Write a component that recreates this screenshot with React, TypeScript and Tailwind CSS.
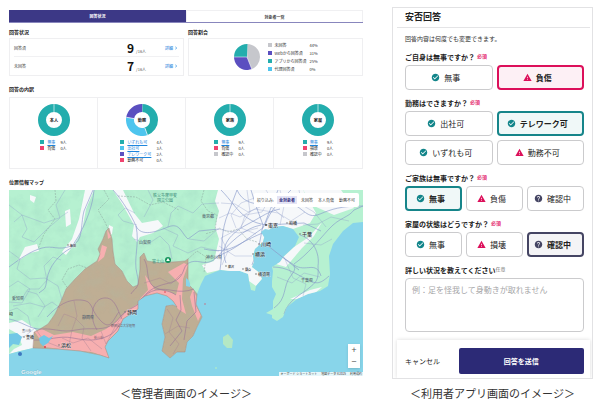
import { useState } from 'react'
import { MdCheckCircle, MdWarning, MdHelp, MdChevronRight } from 'react-icons/md'

const TEAL = '#23adad'
const PURPLE = '#5b4fc0'
const SKY = '#4ec5ee'
const PINK = '#f0436f'
const GRAY = '#c6c7cc'

const summary = [
  { label: '回答済', count: 9 },
  { label: '未回答', count: 7 },
]

const ratios = [
  { label: '未回答', value: 44, color: GRAY },
  { label: 'Webから回答済', value: 31, color: PURPLE },
  { label: 'アプリから回答済', value: 25, color: TEAL },
  { label: '代理回答済', value: 0, color: SKY },
]

const breakdown = [
  {
    title: '本人',
    items: [
      { label: '無事', value: 9, color: TEAL },
      { label: '負傷', value: 0, color: PINK },
    ],
  },
  {
    title: '勤務',
    items: [
      { label: 'いずれも可', value: 4, color: TEAL },
      { label: '出社可', value: 3, color: SKY },
      { label: 'テレワーク可', value: 2, color: PURPLE },
      { label: '勤務不可', value: 0, color: PINK },
    ],
  },
  {
    title: '家族',
    items: [
      { label: '無事', value: 9, color: TEAL },
      { label: '負傷', value: 0, color: PINK },
      { label: '確認中', value: 0, color: GRAY },
    ],
  },
  {
    title: '家屋',
    items: [
      { label: '無事', value: 9, color: TEAL },
      { label: '損壊', value: 0, color: PINK },
      { label: '確認中', value: 0, color: GRAY },
    ],
  },
]

const filters = ['全対象者', '未回答', '本人負傷', '勤務不可']

type Tone = 'ok' | 'bad' | 'unknown'

const questions: { id: string; label: string; initial: string; cols: string; options: { label: string; tone: Tone }[] }[] = [
  {
    id: 'self',
    label: 'ご自身は無事ですか？',
    initial: '負傷',
    cols: 'grid-cols-2',
    options: [
      { label: '無事', tone: 'ok' },
      { label: '負傷', tone: 'bad' },
    ],
  },
  {
    id: 'work',
    label: '勤務はできますか？',
    initial: 'テレワーク可',
    cols: 'grid-cols-2',
    options: [
      { label: '出社可', tone: 'ok' },
      { label: 'テレワーク可', tone: 'ok' },
      { label: 'いずれも可', tone: 'ok' },
      { label: '勤務不可', tone: 'bad' },
    ],
  },
  {
    id: 'family',
    label: 'ご家族は無事ですか？',
    initial: '無事',
    cols: 'grid-cols-3',
    options: [
      { label: '無事', tone: 'ok' },
      { label: '負傷', tone: 'bad' },
      { label: '確認中', tone: 'unknown' },
    ],
  },
  {
    id: 'house',
    label: '家屋の状態はどうですか？',
    initial: '確認中',
    cols: 'grid-cols-3',
    options: [
      { label: '無事', tone: 'ok' },
      { label: '損壊', tone: 'bad' },
      { label: '確認中', tone: 'unknown' },
    ],
  },
]

const selectedTone = {
  ok: 'border-2 border-[#16858a] bg-[#f0f8f8] font-bold',
  bad: 'border-2 border-[#dc0f5a] bg-[#fdf0f5] font-bold',
  unknown: 'border-2 border-[#454563] bg-[#f4f4f6] font-bold',
}

const toneIcon = {
  ok: <MdCheckCircle className="size-[9px] text-[#12858a]" />,
  bad: <MdWarning className="size-[9px] text-[#dc0f5a]" />,
  unknown: <MdHelp className="size-[9px] text-[#454563]" />,
}

function Slices({ items, hole }: { items: { label: string; value: number; color: string }[]; hole: number }) {
  const total = items.reduce((sum, i) => sum + i.value, 0)
  const width = 50 - hole
  const r = hole + width / 2
  const length = 2 * Math.PI * r
  let start = 0
  return (
    <>
      {items.filter((i) => i.value > 0).map((i) => {
        const angle = (start / total) * 360 - 90
        start += i.value
        return (
          <g key={i.label} transform={`rotate(${angle} 50 50)`}>
            <circle cx="50" cy="50" r={r} fill="none" stroke={i.color} strokeWidth={width} strokeDasharray={`${(i.value / total) * length} ${length}`} />
            <line x1={50 + hole} y1="50" x2="100" y2="50" stroke="#fff" strokeWidth="2" />
          </g>
        )
      })}
    </>
  )
}

function Heading({ children }: { children: string }) {
  return <h2 className="text-[5px] leading-[10px] font-bold">{children}</h2>
}

const LAND =
  'M9 191H363V223L353 224L343 232L333 245L329 257L330 275L328 287L320 292L308 295L297 300L287 308L283 318L277 322L272 319L272 316L266 314L273 310L273 302L276 295L272 288L272 282L273 272L272 268L280 263L284 257L295 247L299 238L293 230L283 227L272 228L265 235L263 243L255 250L253 257L254 263L252 268L260 274L262 280L256 287L255 292L251 291L249 282L248 275L240 272L230 272L220 271L205 277L201 285L197 295L196 305L202 318L197 328L193 337L187 343L185 353L177 353L170 359L162 352L165 338L162 325L166 307L173 306L177 308L173 302L167 297L157 294L145 297L138 302L138 310L123 320L118 332L108 342L105 348L109 359L100 356L80 352L57 350L33 349L20 352L9 355Z'

const SHIZUOKA =
  'M33 349L34 333L40 330L48 325L55 315L62 300L66 290L75 280L85 270L97 262L100 255L98 250L103 240L106 232L109 229L112 240L113 252L115 265L122 272L127 282L133 288L138 286L140 270L140 258L144 254L147 262L160 264L185 262L188 260L188 285L194 291L197 295L196 305L202 318L197 328L193 337L187 343L185 353L177 353L170 359L162 352L165 338L162 325L166 307L173 306L177 308L173 302L167 297L157 294L145 297L138 302L138 310L123 320L118 332L108 342L105 348L109 359L100 356L80 352L57 350Z'

const WHITE_AREAS = [
  'M218 191H303L316 214L310 224L293 230L283 227L272 228L265 235L263 243L255 250L253 257L254 263L252 268L260 274L262 280L256 287L249 282L248 275L220 271L207 274L202 266L214 262L219 240L215 228L219 212L215 202Z',
  'M85 191H94L86 210L82 232L74 246L66 256L62 253L72 240L79 220Z',
  'M113 191H123L134 214L142 224L158 221L163 227L153 234L140 238L137 243L132 237L134 226L124 208Z',
  'M9 324L22 321L34 329L38 333L33 349L20 352L9 355L14 350L22 346L18 335L9 330Z',
  'M30 196L36 198L34 204L30 201Z',
  'M65 212L70 210L71 225L66 228Z',
  'M25 248L37 245L39 252L30 254L18 262Z',
  'M303 191H341L354 209L334 216L314 207Z',
  'M294 248L309 238L322 223L314 237L302 249L286 268L276 265Z',
  'M290 300L310 291L322 288L314 295L297 300Z',
  'M109 226L113 228L112 235L108 238Z',
]

const PINK_AREAS = [
  'M35 333L42 330L54 336L73 333L91 337L106 330L116 323L126 312L138 305L138 310L123 320L118 332L108 342L105 348L109 359L92 353L60 350L45 348Z',
  'M98 263L102 246L107 248L104 258Z',
  'M107 230L111 238L108 240Z',
  'M138 302L148 291L145 276L150 283L155 291L168 292L176 296L179 284L168 273L184 264L188 266L183 280L182 300L186 315L178 310L173 302L157 294L145 297Z',
  'M193 290L197 299L196 307L201 316L198 322L192 307L190 298Z',
]

const MOTORWAYS = [
  'M9 268C21 259 31 252 42 249S58 252 71 247S80 228 84 212L93 191',
  'M94 191C93 206 86 224 78 238L71 249C58 256 49 268 47 280S45 289 39 294',
  'M113 191C123 202 131 216 136 227S156 233 168 228S181 234 188 240L199 232L219 230',
  'M136 227C140 245 133 260 137 275S134 289 131 295',
  'M9 320C21 322 31 331 42 330S62 334 76 331S100 332 110 327S119 315 132 309S142 294 156 291S177 296 194 290',
  'M34 341C49 342 58 336 73 339S97 342 108 337S117 323 132 315',
  'M47 318C58 306 68 300 81 301S89 309 100 321S113 320 119 313',
  'M97 331C88 317 93 300 104 299S117 310 122 320',
  'M144 260C149 268 146 278 151 285S168 290 176 296',
  'M140 302C154 282 170 287 178 280S182 266 191 263S207 269 218 257S244 229 261 226',
  'M180 296L181 311L176 321L182 332L170 347',
  'M194 293L196 313L187 322L184 341',
  'M220 271C223 253 220 239 226 220L237 191',
  'M218 257C236 250 248 239 263 229L278 191',
  'M226 264C219 246 231 234 248 225S267 213 280 210',
  'M204 250C217 253 227 252 238 246S255 237 265 233',
  'M221 191C231 201 237 212 246 218S257 224 266 226L304 224L321 232',
  'M237 191C242 202 251 205 262 205S280 198 293 205S308 220 320 215S341 207 363 207',
  'M251 191L256 207L263 226L259 247L252 266',
  'M291 191C281 201 270 211 265 226',
  'M263 243C273 251 282 258 294 266S316 261 321 277',
  'M294 265C308 255 318 242 329 230S348 219 354 211L363 207',
  'M273 268C287 268 296 275 306 280S319 286 329 277',
  'M274 309C287 300 283 287 290 278S294 270 294 266',
  'M284 315C288 301 302 295 309 289S319 282 318 267',
  'M300 236C313 240 320 254 318 267',
]

const ROADS = [
  'M9 206L22 216L27 230L22 238L34 243L46 231L60 219L56 206L65 191',
  'M14 223L22 216L44 224L59 219L68 213',
  'M9 252L20 260L17 270L30 280L45 279L58 287L62 301',
  'M21 301L28 290L39 290L47 281L44 267L53 258L61 261',
  'M9 288L18 282L30 290L22 304L9 303',
  'M13 307L30 304L44 308L52 303L60 309',
  'M38 318L45 307L37 295L27 292',
  'M31 329L28 317L17 309L9 312',
  'M58 327L64 315L75 319L84 328L82 339L91 352',
  'M69 346L72 331L77 317L74 302',
  'M101 332L106 345L116 326L126 312',
  'M9 342L25 337L35 329L44 342L62 349',
  'M62 339L73 344L88 339L102 350',
  'M144 218L153 201L148 191',
  'M137 226L123 222L118 216L125 209L135 214',
  'M134 240L148 245L160 237L169 246L172 260',
  'M163 229L178 236L173 247L188 254L201 248L219 252',
  'M168 228L171 214L178 207L193 214L202 205L219 204',
  'M189 240L204 242L218 230L239 234L258 229',
  'M222 266L228 252L221 239L240 229L250 213L247 191',
  'M219 247L235 257L252 257',
  'M219 219L230 214L240 218L255 210L278 214L291 222L305 213',
  'M221 204L235 205L248 213L260 208L269 196L266 191',
  'M236 229L231 216L241 204L257 198L272 204L288 201',
  'M256 235L241 229L245 216L262 213L267 204L284 219',
  'M280 191L284 207L280 226',
  'M299 191L302 206L314 213L326 228',
  'M303 226L318 225L331 218L349 222',
  'M304 244L321 246L332 240',
  'M284 258L293 279L306 285L303 297',
  'M277 278L292 284L304 274L320 278',
  'M167 310L173 319L169 333L179 345L173 355',
  'M165 335L178 327L190 329',
  'M144 284L160 279L171 285L181 275',
]

const BORDERS = [
  'M55 191L56 202L48 211L55 220L44 235L38 250',
  'M104 191L109 200L98 211L105 223L108 230',
  'M118 197L136 198L150 206L163 203L179 211',
  'M204 191L201 202L208 212L217 216L215 232L205 235',
  'M69 291L62 281L68 270L79 266L87 269',
  'M219 229L228 233L238 230L247 240L257 243',
  'M188 260L197 252L206 258L204 274',
]

const places = [
  { name: '東京', x: 268, y: 228, size: 5 },
  { name: '千葉', x: 302, y: 237, size: 5 },
  { name: '船橋', x: 289, y: 226, size: 4 },
  { name: '川崎', x: 261, y: 247, size: 5 },
  { name: '横浜', x: 255, y: 257, size: 5 },
  { name: '横須賀', x: 258, y: 277, size: 4 },
  { name: '鎌倉', x: 245, y: 272, size: 3 },
  { name: '藤沢', x: 228, y: 269, size: 3 },
  { name: '静岡', x: 127, y: 315, size: 5 },
  { name: '浜松', x: 61, y: 348, size: 5 },
  { name: '豊橋', x: 26, y: 340, size: 4 },
  { name: '飯田', x: 70, y: 248, size: 3 },
]

const regions = [
  { name: '山梨県', x: 139, y: 245 },
  { name: '愛知県', x: 12, y: 301 },
  { name: '静岡県', x: 82, y: 320 },
  { name: '神奈川県', x: 206, y: 260 },
  { name: '東京都', x: 202, y: 219 },
  { name: '千葉県', x: 301, y: 283 },
]

function RegionMap() {
  return (
    <svg viewBox="9 191 354 186" preserveAspectRatio="xMidYMid slice" className="block h-full w-full" role="img" aria-label="位置情報マップ">
      <defs>
        <filter id="relief" x="0" y="0" width="100%" height="100%">
          <feTurbulence type="fractalNoise" baseFrequency="0.09" numOctaves="3" seed="4" />
          <feColorMatrix values="0 0 0 0 0.3  0 0 0 0 0.6  0 0 0 0 0.5  1.6 0 0 0 -0.62" />
        </filter>
        <clipPath id="land"><path d={LAND} /></clipPath>
        <clipPath id="shizuoka"><path d={SHIZUOKA} /></clipPath>
      </defs>
      <rect x="9" y="191" width="354" height="186" fill="#88d5ea" />
      <path d={LAND} fill="#b6f1d1" />
      <g clipPath="url(#land)">
        <rect x="9" y="191" width="215" height="170" filter="url(#relief)" opacity="0.3" />
        {WHITE_AREAS.map((d) => <path key={d} d={d} fill="#f6f8fa" />)}
        {BORDERS.map((d) => <path key={d} d={d} fill="none" stroke="#8ba39c" strokeWidth="0.5" strokeDasharray="2 1" />)}
        {ROADS.map((d) => <path key={d} d={d} fill="none" stroke="#8b9cc9" strokeWidth="0.5" strokeLinejoin="round" opacity="0.7" />)}
        {MOTORWAYS.map((d) => <path key={d} d={d} fill="none" stroke="#8799ca" strokeWidth="0.7" opacity="0.9" />)}
      </g>
      <g clipPath="url(#shizuoka)">
        <path d={SHIZUOKA} fill="#bfae94" />
        <rect x="45" y="225" width="145" height="130" filter="url(#relief)" opacity="0.14" />
        {PINK_AREAS.map((d) => <path key={d} d={d} fill="#f7afb0" />)}
        {ROADS.map((d) => <path key={d} d={d} fill="none" stroke="#a58397" strokeWidth="0.5" strokeLinejoin="round" opacity="0.8" />)}
        {MOTORWAYS.map((d) => <path key={d} d={d} fill="none" stroke="#9c7797" strokeWidth="0.7" opacity="0.9" />)}
      </g>
      <path d={SHIZUOKA} fill="none" stroke="#a8807f" strokeWidth="0.5" />
      <path d="M39 339L44 336L49 339L53 337L48 344L43 347L40 344Z M9 335L17 334L22 338L19 346L13 345L9 349Z" fill="#72c8e6" />
      <path d="M261 233l4 -3l5 1l-1 6l-5 1z M186 279q5 3 4 9l-4 -1z" fill="#88d5ea" />
      <path d="M223 338L228 335L233 341L232 349L227 349L223 345Z" fill="#b4e8c5" />
      <path d="M263 243L299 271" fill="none" stroke="#8b9cc9" strokeWidth="0.7" />
      <circle cx="168" cy="261" r="3" fill="#16945c" />
      <path d="M168 259l1.8 3h-3.6z" fill="#fff" />
      <circle cx="45" cy="348" r="1" fill="#e03c4b" />
      <circle cx="165" cy="293" r="0.8" fill="#e03c4b" />
      <circle cx="205" cy="305" r="0.7" fill="#d4576c" />
      <circle cx="216" cy="369" r="1" fill="#a8e7cd" />
      <circle cx="266" cy="226" r="1" fill="#333" />
      <circle cx="20" cy="355" r="2" fill="#3d78c0" />
      {places.map((p) => (
        <g key={p.name}>
          <circle cx={p.x - 2} cy={p.y - 2} r="0.6" fill="#fff" stroke="#444" strokeWidth="0.4" />
          <text x={p.x} y={p.y} fontSize={p.size} fontWeight="500" fill="#2c3138" stroke="#fff" strokeWidth="0.6" strokeOpacity="0.6" paintOrder="stroke">{p.name}</text>
        </g>
      ))}
      {regions.map((p) => <text key={p.name} x={p.x} y={p.y} fontSize="4" fontWeight="500" fill="#566370">{p.name}</text>)}
      <text x="153" y="198" fontSize="4" fill="#3f8f7c">秩父多摩甲斐</text>
      <text x="157" y="203" fontSize="4" fill="#3f8f7c">国立公園</text>
      <text x="152" y="264" fontSize="4" fill="#3f8f7c">富士山</text>
      <text x="111" y="328" fontSize="3" fill="#6b5d6b">静岡県立大学短期</text>
      <text x="94" y="340" fontSize="3" fill="#7b5d6b">掛川市</text>
      <text x="22" y="333" fontSize="3" fill="#566370">豊川市</text>
      <text x="9" y="317" fontSize="4" fill="#2c3138">崎</text>
      <text x="21" y="375" fontSize="6" fontWeight="700" fill="#e9f6fa" stroke="#6eaec4" strokeWidth="0.4" paintOrder="stroke" fontFamily="Liberation Sans, sans-serif">Google</text>
    </svg>
  )
}

function AdminScreen() {
  const [tab, setTab] = useState(0)
  const [filter, setFilter] = useState('全対象者')
  return (
    <div className="text-[4px]">
      <div role="tablist" className="grid grid-cols-2 border-b border-[#8886bd]">
        {['回答状況', '対象者一覧'].map((name, i) => (
          <button
            key={name}
            role="tab"
            aria-selected={tab === i}
            onClick={() => setTab(i)}
            className={tab === i ? 'h-3 bg-[#3c3886] font-bold text-white' : 'h-3 border-x border-t border-[#f0f0f2] font-bold text-[#444]'}
          >
            {name}
          </button>
        ))}
      </div>

      <div className="mt-1 grid grid-cols-2 gap-1">
        <section className="flex flex-col gap-px">
          <Heading>回答状況</Heading>
          <div className="flex-1 divide-y divide-[#f1f1f3] border border-[#efeff1] px-1">
            {summary.map((s) => (
              <div key={s.label} className="grid h-[18px] grid-cols-[1fr_24px_28px] items-center">
                <span className="text-[#444]">{s.label}</span>
                <span className="flex items-baseline gap-[2px]">
                  <b className="text-[12px] leading-none text-[#111]">{s.count}</b>
                  <span className="text-[#555]">/16人</span>
                </span>
                <a href="#detail" className="flex items-center justify-end font-medium text-[#1f86dd]">
                  詳細
                  <MdChevronRight className="size-[6px]" />
                </a>
              </div>
            ))}
          </div>
        </section>
        <section className="flex flex-col gap-px">
          <Heading>回答割合</Heading>
          <div className="flex flex-1 items-center justify-center gap-2 border border-[#efeff1]">
            <svg viewBox="0 0 100 100" className="size-[26px]"><Slices items={ratios} hole={0} /></svg>
            <ul className="w-[50px]">
              {ratios.map((r) => (
                <li key={r.label} className="flex h-2 items-center gap-[3px] whitespace-nowrap text-[#333]">
                  <i className="size-1 shrink-0" style={{ background: r.color }} />
                  <span className="flex-1">{r.label}</span>
                  <span className="w-2">{r.value}%</span>
                </li>
              ))}
            </ul>
          </div>
        </section>
      </div>

      <section className="mt-2 flex flex-col gap-[3px]">
        <Heading>回答の内訳</Heading>
        <div className="grid h-[72px] grid-cols-4 divide-x divide-[#efeff1] border border-[#efeff1]">
          {breakdown.map((b) => (
            <div key={b.title} className="flex flex-col items-center gap-[3px] pt-[6px]">
              <svg viewBox="0 0 100 100" className="size-8">
                <Slices items={b.items} hole={25} />
                <text x="50" y="55" fontSize="13" fontWeight="700" textAnchor="middle" fill="#222">{b.title}</text>
              </svg>
              <ul>
                {b.items.map((i) => (
                  <li key={i.label} className="flex h-[6px] items-center gap-[3px] whitespace-nowrap text-[#333]">
                    <i className="size-1 shrink-0" style={{ background: i.color }} />
                    <span className="flex-1 pr-[2px]">
                      {i.value > 0 ? <a href="#list" className="text-[#1f86dd] underline">{i.label}</a> : i.label}
                    </span>
                    <span>{i.value}人</span>
                  </li>
                ))}
              </ul>
            </div>
          ))}
        </div>
      </section>

      <section className="mt-2 flex flex-col gap-[3px]">
        <Heading>位置情報マップ</Heading>
        <div className="relative aspect-[354/186] overflow-hidden">
          <RegionMap />
          <div className="absolute top-[3px] right-1 flex h-[14px] items-center gap-[3px] rounded-[2px] bg-white px-[3px] text-[#444]">
            <span>絞り込み:</span>
            {filters.map((f) => (
              <button key={f} onClick={() => setFilter(f)} className={filter === f ? 'bg-[#e4e4f5] px-[2px] py-px font-bold text-[#2e2b7c]' : 'px-px'}>
                {f}
              </button>
            ))}
          </div>
          <div className="absolute right-[3px] bottom-2 flex w-3 flex-col bg-white text-[9px] leading-3 text-[#555] shadow-sm">
            <button aria-label="拡大" className="h-3">+</button>
            <button aria-label="縮小" className="h-3">−</button>
          </div>
          <div className="absolute right-0 bottom-0 flex gap-1 bg-white/80 px-px text-[3px] leading-[4px] text-[#333]">
            <span>キーボード ショートカット</span>
            <span>地図データ ©2025</span>
            <span>利用規約</span>
          </div>
        </div>
      </section>
    </div>
  )
}

function Question({ id, label, initial, cols, options }: (typeof questions)[number]) {
  const [value, setValue] = useState(initial)
  return (
    <fieldset>
      <legend className="mb-[3px] flex h-[10px] gap-[2px] text-[7px] leading-[10px] font-bold">
        {label}
        <span className="text-[5px] leading-2 text-[#e3256b]">必須</span>
      </legend>
      <div className={`grid gap-1 ${cols}`}>
        {options.map((o) => (
          <label
            key={o.label}
            className={`relative flex h-[25px] items-center justify-center gap-1 rounded-[4px] pr-[6px] text-[8px] ${value === o.label ? selectedTone[o.tone] : 'border border-[#cbcbcd] bg-white'}`}
          >
            <input type="radio" name={id} className="sr-only" checked={value === o.label} onChange={() => setValue(o.label)} />
            {toneIcon[o.tone]}
            {o.label}
          </label>
        ))}
      </div>
    </fieldset>
  )
}

function UserApp() {
  return (
    <form className="overflow-hidden border border-[#e2e2e4] text-[#222]" onSubmit={(e) => e.preventDefault()}>
      <h1 className="mr-[2px] ml-1 h-5 border-b border-[#e4e4e6] pl-2 text-[9px] leading-[18px] font-bold">安否回答</h1>
      <div className="flex flex-col gap-2 pt-[6px] pr-2 pb-2 pl-3">
        <p className="text-[6px] leading-[10px] text-[#333]">回答内容は何度でも変更できます。</p>
        {questions.map((q) => <Question key={q.id} {...q} />)}
        <div className="flex flex-col gap-[3px]">
          <label htmlFor="detail" className="flex text-[7px] leading-[10px] font-bold">
            詳しい状況を教えてください
            <span className="text-[5px] leading-2 font-normal text-[#777]">任意</span>
          </label>
          <textarea
            id="detail"
            placeholder="例：足を怪我して身動きが取れません"
            className="block h-[54px] w-full resize-none rounded-[4px] border border-[#cbcbcd] px-[6px] py-[5px] text-[8px] leading-[12px] placeholder:text-[#a6a6a8]"
          />
        </div>
      </div>
      <div className="mr-[2px] ml-1 flex items-center justify-between py-2 pr-[6px] pl-2 pb-1 text-[7px] shadow-[0_0_4px_rgba(0,0,0,0.15)]">
        <button type="button">キャンセル</button>
        <button type="submit" className="h-[26px] w-[70%] rounded-[2px] bg-[#2c2a76] font-bold text-white">回答を送信</button>
      </div>
    </form>
  )
}

export default function App() {
  return (
    <main className="grid grid-cols-[354fr_201fr] gap-x-[29px] bg-white pr-[7px] pl-[9px] font-['Noto_Sans_CJK_JP',sans-serif] text-[#222]">
      <figure className="flex flex-col justify-between pt-[10px]">
        <AdminScreen />
        <figcaption className="text-center text-[11px] leading-4 text-[#333]">＜管理者画面のイメージ＞</figcaption>
      </figure>
      <figure className="flex flex-col gap-[6px] pt-[7px]">
        <UserApp />
        <figcaption className="text-center text-[11px] leading-4 text-[#333]">＜利用者アプリ画面のイメージ＞</figcaption>
      </figure>
    </main>
  )
}
